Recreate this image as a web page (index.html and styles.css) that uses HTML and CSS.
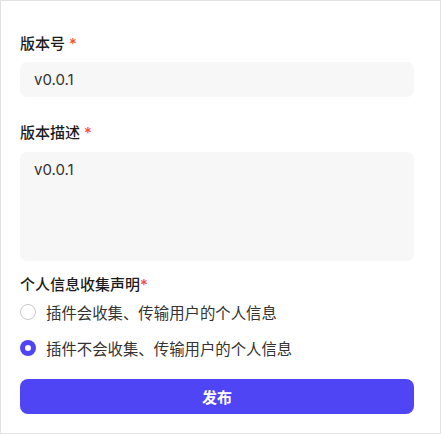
FILE: index.html
```html
<!DOCTYPE html>
<html lang="zh-CN">
<head>
<meta charset="utf-8">
<title>发布</title>
<link rel="stylesheet" href="styles.css">
</head>
<body>
<div class="panel">
  <div class="field">
    <div class="label">版本号 <span class="req">*</span></div>
    <input class="input" type="text" value="v0.0.1">
  </div>
  <div class="field">
    <div class="label">版本描述 <span class="req">*</span></div>
    <textarea class="textarea">v0.0.1</textarea>
  </div>
  <div class="field field-radio">
    <div class="label">个人信息收集声明<span class="req">*</span></div>
    <div class="radios">
      <label class="radio"><span class="dot"></span><span class="radio-text">插件会收集、传输用户的个人信息</span></label>
      <label class="radio checked"><span class="dot"></span><span class="radio-text">插件不会收集、传输用户的个人信息</span></label>
    </div>
  </div>
  <button class="submit" type="button">发布</button>
</div>
</body>
</html>
```
FILE: styles.css
```css
* { box-sizing: border-box; }
html, body { margin: 0; padding: 0; background: #fff; }
body {
  font-family: Inter, "Noto Sans CJK SC", "Noto Sans", sans-serif;
  color: #1f1f1f;
}
.panel {
  width: 441px;
  height: 434px;
  border: 1px solid #e2e2e2;
  padding: 32px 26px 0 19px;
  display: flex;
  flex-direction: column;
}
.field { display: flex; flex-direction: column; }
.label {
  font-size: 15px;
  line-height: 22px;
  font-weight: 500;
  color: #1c1c1c;
}
.req { color: #f0503c; }
.input, .textarea {
  font-family: Inter, "Noto Sans CJK SC", sans-serif;
  font-size: 15px;
  color: #333;
  background: #f7f7f7;
  border: none;
  border-radius: 7px;
  outline: none;
  width: 100%;
  margin: 0;
}
.input {
  height: 35px;
  margin-top: 7px;
  padding: 0 14px;
  margin-bottom: 25px;
}
.textarea {
  height: 109px;
  margin-top: 8px;
  padding: 7px 14px;
  line-height: 22px;
  resize: none;
  margin-bottom: 13px;
}
.radios {
  display: flex;
  flex-direction: column;
  gap: 12px;
  margin-top: 4px;
}
.radio {
  display: flex;
  align-items: center;
  gap: 10px;
  height: 24px;
  font-size: 15.4px;
  color: #333;
}
.dot {
  width: 16px;
  height: 16px;
  border-radius: 50%;
  border: 1px solid #c9c9c9;
  background: #fff;
  flex: none;
  display: flex;
  align-items: center;
  justify-content: center;
}
.radio.checked .dot {
  border: none;
  background: #5045f4;
}
.radio.checked .dot::after {
  content: "";
  width: 6px;
  height: 6px;
  border-radius: 50%;
  background: #fff;
}
.submit {
  margin-top: 19px;
  height: 35px;
  width: 100%;
  border: none;
  border-radius: 8px;
  background: #5045f4;
  color: #fff;
  font-family: Inter, "Noto Sans CJK SC", sans-serif;
  font-size: 15px;
  font-weight: 600;
}
```
